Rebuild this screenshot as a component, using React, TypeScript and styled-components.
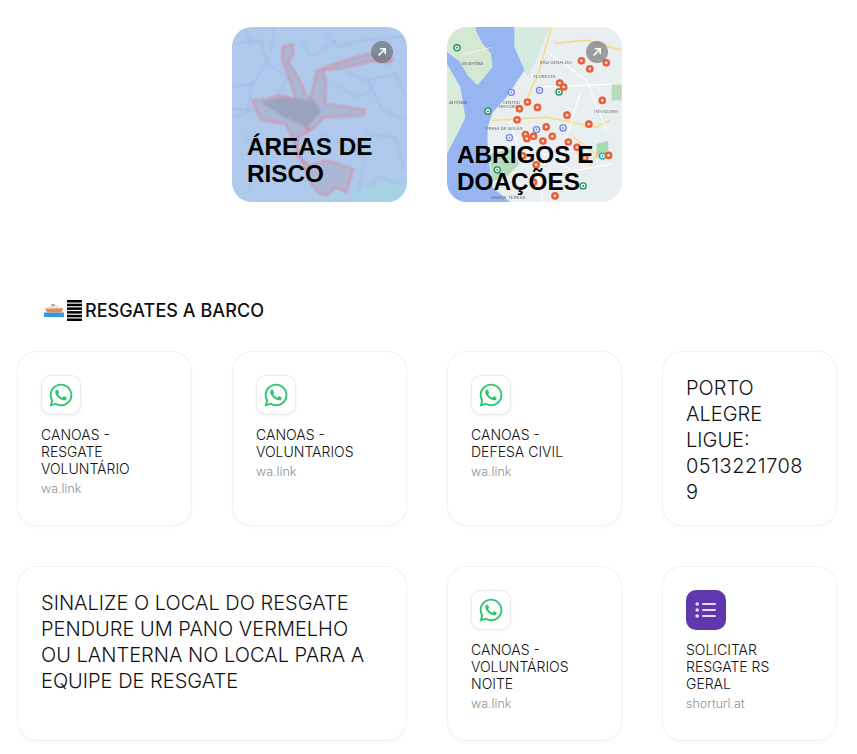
import React, { FC } from 'react';
import styled, { createGlobalStyle } from 'styled-components';
import { FaWhatsapp } from 'react-icons/fa';

const RISK_AREA =
  'M175 80 L205 72 L205 105 L190 125 L215 160 L230 190 L245 225 L258 235 L268 190 L278 150 L350 125 L430 100 L505 115 L495 128 L440 122 L345 145 L295 150 L305 190 L300 250 L420 268 L415 285 L300 290 L275 315 L250 335 L225 345 L215 400 L255 435 L300 420 L330 425 L385 445 L365 515 L335 500 L305 525 L280 515 L255 480 L225 400 L200 345 L185 310 L110 298 L85 240 L130 235 L160 225 L215 235 L200 190 L175 120 Z';

const SHELTERS = [
  [425, 122], [450, 146], [499, 128], [360, 188], [372, 200], [487, 240], [264, 245], [240, 265],
  [294, 261], [382, 284], [233, 298], [447, 311], [320, 319], [258, 342], [282, 347], [338, 347],
  [262, 354], [310, 361], [386, 364], [412, 380], [506, 404], [435, 412], [250, 405], [290, 432],
  [282, 484], [346, 525],
];

const PINS = [
  [300, 210, '#6c7fe8'], [216, 216, '#6c7fe8'], [370, 322, '#6c7fe8'], [291, 327, '#6c7fe8'],
  [210, 351, '#6c7fe8'], [488, 406, '#2aa6a0'], [358, 215, '#1e8e5a'], [146, 272, '#1e8e5a'],
  [174, 447, '#1e8e5a'], [430, 495, '#1e8e5a'], [54, 83, '#1e8e5a'],
];

const MAP_LABELS: [number, number, string, number][] = [
  [300, 130, 'SÃO GERALDO', 96], [282, 172, 'FLORESTA', 66], [190, 250, 'CENTRO', 52],
  [178, 263, 'HISTÓRICO', 70], [462, 278, 'TRÊS FIGUEIRAS', 72], [140, 328, 'PRAIA DE BELAS', 110],
  [155, 535, 'SANTA TERESA', 104], [68, 134, 'Ilha da Pintada', 64], [30, 250, 'da Pintada', 54],
];

const ROADS = [
  'M40 70 L110 60 L130 130 L85 190 L30 200',
  'M130 130 L190 170 L160 220',
  'M300 30 L340 80 L420 60 L540 50',
  'M85 190 L70 280 L30 290',
  'M430 180 L510 160 L545 230',
  'M370 160 L430 180 L470 265 L545 300',
  'M420 340 L510 350 L540 450',
  'M60 340 L130 420 L70 500',
  'M430 500 L460 470 L530 490',
  'M230 60 L260 110 L340 60',
  'M60 25 L80 70 M150 25 L140 95 M300 340 L420 410 L400 520',
  'M330 190 L400 230 L440 210 M24 265 L95 270',
];

const RiskMap: FC = () => (
  <MapSvg viewBox="24 21 522 522" preserveAspectRatio="none">
    <defs>
      <filter id="riskBlur">
        <feGaussianBlur stdDeviation="2.4" />
      </filter>
    </defs>
    <rect x="0" y="0" width="600" height="600" fill="#aec9ec" />
    <g filter="url(#riskBlur)">
      <g fill="none" stroke="#8dabdd" strokeWidth="2">
        {ROADS.map(d => (
          <path key={d} d={d} />
        ))}
      </g>
      <path d="M380 520 L470 480 L545 500 L545 545 L380 545 Z" fill="#a6d2e6" />
      <path d="M250 450 L370 450 L360 520 L300 545 L270 520 Z" fill="#a6d2e6" />
      <path d={RISK_AREA} fill="#abb7d4" stroke="#e07a8a" strokeWidth="3.5" strokeLinejoin="round" />
      <path d="M110 245 L170 232 L270 240 L290 275 L245 320 L180 290 Z" fill="#9aa3bd" />
      <circle cx="248" cy="324" r="6" fill="#e0727d" />
    </g>
  </MapSvg>
);

const ShelterMap: FC = () => (
  <MapSvg viewBox="24 21 522 522" preserveAspectRatio="none">
    <defs>
      <filter id="shelterBlur">
        <feGaussianBlur stdDeviation="1.5" />
      </filter>
    </defs>
    <rect x="0" y="0" width="600" height="600" fill="#e9eef0" />
    <g filter="url(#shelterBlur)">
      <path d="M24 100 L110 180 L90 300 L24 400 Z" fill="#d9ebdb" />
      <path d="M225 21 L330 21 L300 100 L265 170 L225 120 Z" fill="#d6ebe0" />
      <path
        d="M24 95 L84 140 L110 21 L225 21 L225 80 L255 150 L200 232 L160 276 L145 320 L145 370 L150 430 L160 500 L215 545 L24 545 L24 400 L60 330 L79 291 L64 201 L24 131 Z"
        fill="#97b5f1"
      />
      <path d="M24 21 L105 21 L130 70 L155 100 L160 140 L115 195 L85 165 L60 120 L24 90 Z" fill="#d3e9d2" />
      <path d="M70 104 L155 82" fill="none" stroke="#f4f7f4" strokeWidth="2.5" />
      <path d="M150 400 L215 385 L240 430 L200 470 L160 480 Z" fill="#b5dcb7" />
      <path d="M470 370 L505 360 L505 410 L470 410 Z" fill="#a9d9ae" />
      <path d="M515 190 L545 190 L545 240 L515 240 Z" fill="#b6dcbb" />
      <g fill="none" stroke="#f6dc8f" strokeWidth="5">
        <path d="M335 21 L300 150 L265 230" />
        <path d="M345 70 L440 60 L545 90" />
        <path d="M160 300 L320 290 L470 320 L510 300" />
        <path d="M400 350 L470 400 L450 440" />
      </g>
      <g fill="none" stroke="#ffffff" strokeWidth="3">
        <path d="M300 200 L545 190" />
        <path d="M330 100 L440 180 L500 330" />
        <path d="M230 350 L400 450 L520 430" />
        <path d="M280 370 L310 545" />
        <path d="M420 220 L360 420" />
        <path d="M210 300 L250 420" />
      </g>
      {MAP_LABELS.map(([x, y, label, width]) => (
        <MapLabel key={label} x={x} y={y} textLength={width} lengthAdjust="spacingAndGlyphs">
          {label}
        </MapLabel>
      ))}
      {PINS.map(([x, y, color]) => (
        <g key={`${x}-${y}`}>
          <circle cx={x as number} cy={y as number} r="9" fill="#fff" stroke={color as string} strokeWidth="4" />
          <circle cx={x as number} cy={y as number} r="3" fill={color as string} />
        </g>
      ))}
      {SHELTERS.map(([x, y]) => (
        <g key={`${x}-${y}`}>
          <circle cx={x} cy={y} r="11.5" fill="#e8603a" />
          <circle cx={x} cy={y} r="4" fill="#fde2d0" />
        </g>
      ))}
    </g>
  </MapSvg>
);

const ArrowIcon: FC = () => (
  <svg width="10" height="10" viewBox="0 0 10 10" fill="none" stroke="#fff" strokeWidth="1.6">
    <path d="M1.5 8.5 L8 2 M3 1.8 H8.2 V7" />
  </svg>
);

const BoatEmoji: FC = () => (
  <svg width="20" height="14" viewBox="0 0 20 14">
    <rect x="0" y="9.5" width="20" height="4.5" fill="#2f9bdc" />
    <path d="M1 5.5 L19 5 L17.5 9.5 L3 9.5 Z" fill="#dc8a5c" />
    <path d="M4 3.5 L14 2 L15 5.2 L4 5.5 Z" fill="#e9e4da" />
    <rect x="7" y="1" width="4" height="2" fill="#b8b0a4" />
  </svg>
);

const StackedGlyph: FC = () => (
  <svg width="15" height="21" viewBox="0 0 15 21" fill="#000">
    {[0, 3.7, 7.4, 11.1, 14.8, 18.5].map(y => (
      <rect key={y} y={y} width="15" height="2.5" />
    ))}
  </svg>
);

const FormsIcon: FC = () => (
  <svg width="22" height="18" viewBox="0 0 22 18" fill="#ead9ff">
    <circle cx="2.2" cy="3" r="1.8" />
    <circle cx="2.2" cy="9" r="1.8" />
    <circle cx="2.2" cy="15" r="1.8" />
    <rect x="7" y="2" width="14" height="2" rx="1" />
    <rect x="7" y="8" width="14" height="2" rx="1" />
    <rect x="7" y="14" width="14" height="2" rx="1" />
  </svg>
);

type LinkCardProps = { title: string; host: string; forms?: boolean };

const LinkCard: FC<LinkCardProps> = ({ title, host, forms }) => (
  <Card>
    {forms ? (
      <FormsBadge>
        <FormsIcon />
      </FormsBadge>
    ) : (
      <IconBadge>
        <FaWhatsapp size={26} color="#2ec56f" />
      </IconBadge>
    )}
    <CardTitle>{title}</CardTitle>
    <CardHost>{host}</CardHost>
  </Card>
);

const App: FC = () => (
  <>
    <GlobalStyle />
    <Page>
      <MapRow>
        <MapTile>
          <RiskMap />
          <ArrowBadge>
            <ArrowIcon />
          </ArrowBadge>
          <MapTitle $left={15} $bottom={15}>
            ÁREAS DE RISCO
          </MapTitle>
        </MapTile>
        <MapTile>
          <ShelterMap />
          <ArrowBadge>
            <ArrowIcon />
          </ArrowBadge>
          <MapTitle $left={10} $bottom={7}>
            ABRIGOS E DOAÇÕES
          </MapTitle>
        </MapTile>
      </MapRow>
      <Heading>
        <BoatEmoji />
        <StackedGlyph />
        RESGATES A BARCO
      </Heading>
      <CardGrid>
        <LinkCard title="CANOAS - RESGATE VOLUNTÁRIO" host="wa.link" />
        <LinkCard title="CANOAS - VOLUNTARIOS" host="wa.link" />
        <LinkCard title="CANOAS - DEFESA CIVIL" host="wa.link" />
        <Card>
          <PhoneText>
            PORTO ALEGRE LIGUE: <Digits>05132217089</Digits>
          </PhoneText>
        </Card>
        <WideCard>
          <BigText>SINALIZE O LOCAL DO RESGATE PENDURE UM PANO VERMELHO OU LANTERNA NO LOCAL PARA A EQUIPE DE RESGATE</BigText>
        </WideCard>
        <LinkCard title="CANOAS - VOLUNTÁRIOS NOITE" host="wa.link" />
        <LinkCard title="SOLICITAR RESGATE RS GERAL" host="shorturl.at" forms />
      </CardGrid>
    </Page>
  </>
);
export default App;

const GlobalStyle = createGlobalStyle`
  html, body {
    margin: 0;
    background: #fff;
    overflow: hidden;
  }
  * {
    box-sizing: border-box;
  }
`;

const Page = styled.div`
  width: 857px;
  height: 754px;
  padding: 27px 0 0 17px;
  font-family: Inter, 'Liberation Sans', sans-serif;
  color: #1a1a1a;
`;

const MapRow = styled.div`
  display: flex;
  gap: 40px;
  padding-left: 215px;
`;

const MapTile = styled.div`
  position: relative;
  width: 175px;
  height: 175px;
  border-radius: 20px;
  overflow: hidden;
`;

const MapSvg = styled.svg`
  display: block;
  width: 100%;
  height: 100%;
`;

const MapLabel = styled.text`
  font-family: Inter, sans-serif;
  font-size: 11px;
  fill: #5f6468;
`;

const ArrowBadge = styled.div`
  position: absolute;
  top: 14px;
  right: 14px;
  width: 22px;
  height: 22px;
  border-radius: 50%;
  background: rgba(90, 90, 90, 0.55);
  display: flex;
  align-items: center;
  justify-content: center;
`;

const MapTitle = styled.div<{ $left: number; $bottom: number }>`
  position: absolute;
  left: ${p => p.$left}px;
  right: 10px;
  bottom: ${p => p.$bottom}px;
  font-family: 'Liberation Sans', Arial, sans-serif;
  font-size: 24.3px;
  font-weight: 700;
  line-height: 27px;
  color: #000;
`;

const Heading = styled.div`
  display: flex;
  align-items: center;
  height: 24px;
  margin: 96px 0 29px 27px;
  font-size: 18px;
  font-weight: 500;
  letter-spacing: 0.05px;
  color: #111;

  svg {
    margin-right: 3px;
  }
`;

const CardGrid = styled.div`
  display: grid;
  grid-template-columns: repeat(4, 175px);
  grid-auto-rows: 175px;
  gap: 40px;
`;

const Card = styled.div`
  padding: 23px;
  background: #fff;
  border: 1px solid rgba(0, 0, 0, 0.05);
  border-radius: 20px;
  box-shadow: 0 2px 4px rgba(0, 0, 0, 0.02);
`;

const WideCard = styled(Card)`
  grid-column: span 2;
`;

const IconBadge = styled.div`
  display: flex;
  align-items: center;
  justify-content: center;
  width: 40px;
  height: 40px;
  border: 1px solid rgba(0, 0, 0, 0.08);
  border-radius: 10px;
  background: #fff;
  box-shadow: 0 1px 3px rgba(0, 0, 0, 0.06);
`;

const FormsBadge = styled(IconBadge)`
  border: none;
  background: #5f38ad;
  box-shadow: none;
`;

const CardTitle = styled.div`
  max-width: 118px;
  margin-top: 11px;
  font-size: 14px;
  font-weight: 300;
  line-height: 17px;
  color: #111;
`;

const CardHost = styled.div`
  margin-top: 3px;
  font-size: 12.5px;
  font-weight: 300;
  line-height: 17px;
  color: #8f8f8f;
`;

const BigText = styled.div`
  font-size: 20px;
  font-weight: 300;
  line-height: 26px;
  color: #111;
`;

const PhoneText = styled(BigText)`
  padding-right: 4px;
  overflow-wrap: anywhere;
`;

const Digits = styled.span`
  letter-spacing: 0.5px;
`;
